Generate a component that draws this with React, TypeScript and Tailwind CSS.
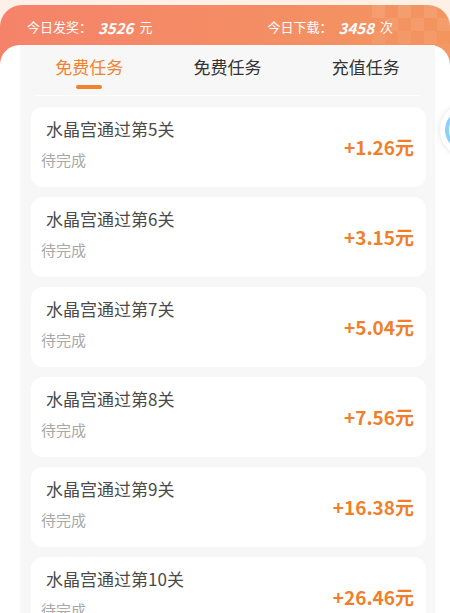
import React from 'react'

const tasks = [
  { level: 5, amount: '1.26' },
  { level: 6, amount: '3.15' },
  { level: 7, amount: '5.04' },
  { level: 8, amount: '7.56' },
  { level: 9, amount: '16.38' },
  { level: 10, amount: '26.46' },
]

const tabs = ['免费任务', '免费任务', '充值任务']

function Checker() {
  const cells: React.ReactNode[] = []
  for (let r = 0; r < 4; r++) {
    for (let c = 0; c < 6; c++) {
      if ((r + c) % 2 === 0) {
        cells.push(<rect key={`${r}-${c}`} x={c * 13} y={r * 13} width="13" height="13" fill="#ffffff" opacity={0.1 - r * 0.02} />)
      }
    }
  }
  return (
    <svg className="absolute right-0 top-0" width="78" height="52" viewBox="0 0 78 52">
      {cells}
    </svg>
  )
}

export default function App() {
  return (
    <div className="w-[450px] h-[613px] overflow-hidden bg-[#fdf0e6] relative" style={{ fontFamily: '"Noto Sans CJK SC", "Noto Sans", sans-serif' }}>
      {/* header */}
      <div className="mt-[5px] h-[64px] rounded-t-[22px] bg-gradient-to-r from-[#f5836a] to-[#f3955f] relative overflow-hidden">
        <Checker />
        <div className="relative h-[40px] pt-[4px] flex items-center justify-between pl-[27px] pr-[57px] text-white text-[13px]">
          <div className="flex items-center">
            <span>今日发奖：</span>
            <span className="text-[15px] font-bold italic mx-[6px] leading-none">3526</span>
            <span>元</span>
          </div>
          <div className="flex items-center">
            <span>今日下载：</span>
            <span className="text-[15px] font-bold italic mx-[6px] leading-none">3458</span>
            <span>次</span>
          </div>
        </div>
      </div>

      {/* body */}
      <div className="-mt-[24px] relative bg-white rounded-t-[20px] h-[600px]">
        <div className="ml-[20px] mr-[15px] bg-[#f7f7f7] h-full">
          <div className="grid grid-cols-3 h-[50px]">
            {tabs.map((t, i) => (
              <div key={i} className="flex flex-col items-center pt-[9px]">
                <span className={`text-[17px] leading-[26px] ${i === 0 ? 'text-[#f08232]' : 'text-[#333333]'}`}>{t}</span>
                {i === 0 && <span className="mt-[5px] w-[26px] h-[4px] rounded-full bg-[#f4812d]" />}
              </div>
            ))}
          </div>
          <div className="mx-[15px] h-[1px] bg-white" />
          <div className="pl-[11px] pr-[9px] pt-[11px] flex flex-col gap-[10px]">
            {tasks.map((t) => (
              <div key={t.level} className="bg-white rounded-[12px] h-[80px] flex items-start justify-between pr-[12px]">
                <div className="flex flex-col pt-[10px]">
                  <span className="ml-[15px] text-[17px] leading-[24px] text-[#4a4a4a]">水晶宫通过第{t.level}关</span>
                  <span className="ml-[10px] mt-[9px] text-[15px] leading-[20px] text-[#a8a8a8]">待完成</span>
                </div>
                <span className="mt-[26px] text-[19px] leading-[28px] font-bold text-[#f07f2c]">+{t.amount}元</span>
              </div>
            ))}
          </div>
        </div>
      </div>

      {/* floating button, cut by the edge */}
      <div className="absolute left-[440px] top-[104px] w-[52px] h-[52px] rounded-full bg-white shadow-[0_0_6px_rgba(0,0,0,0.12)] flex items-center justify-center">
        <div className="w-[42px] h-[42px] rounded-full border-[4px] border-[#8fd0f8]" />
      </div>
    </div>
  )
}
